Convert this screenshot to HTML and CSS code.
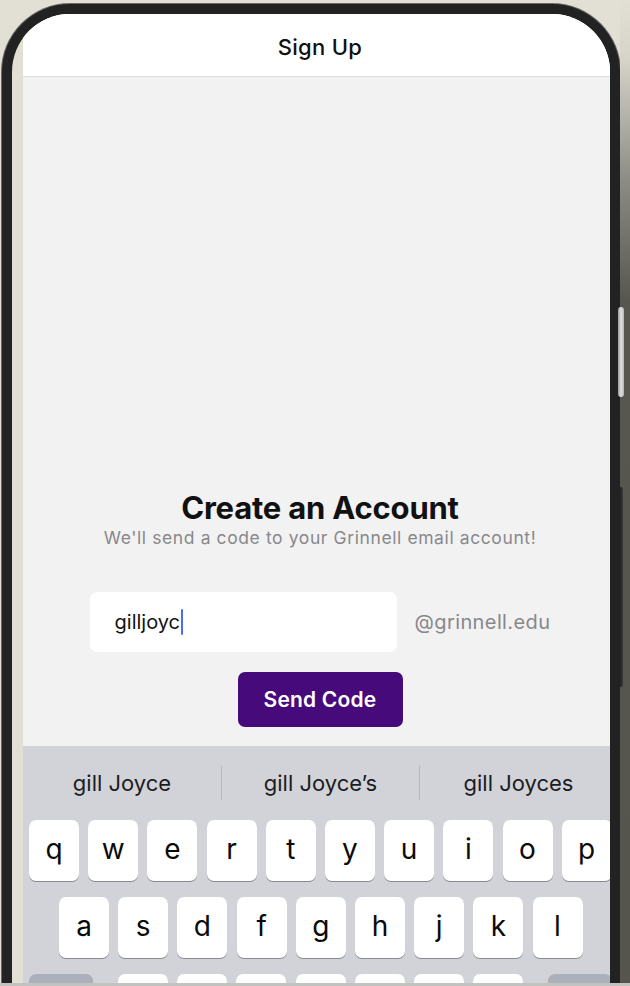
FILE: index.html
```html
<!DOCTYPE html>
<html lang="en">
<head>
<meta charset="utf-8">
<title>Sign Up</title>
<link rel="stylesheet" href="styles.css">
</head>
<body>
<div class="device">
  <div class="phone">
    <div class="screen">
      <header class="nav"><h1>Sign Up</h1></header>
      <main class="content">
        <h2 class="title">Create an Account</h2>
        <p class="subtitle">We'll send a code to your Grinnell email account!</p>
        <div class="email-row">
          <div class="field"><span class="typed">gilljoyc</span><span class="caret"></span></div>
          <span class="domain">@grinnell.edu</span>
        </div>
        <button class="send" type="button">Send Code</button>
      </main>
      <div class="keyboard">
        <div class="suggestions">
          <span class="sugg">gill Joyce</span>
          <span class="sugg">gill Joyce’s</span>
          <span class="sugg">gill Joyces</span>
        </div>
        <div class="krow r1">
          <span class="key">q</span><span class="key">w</span><span class="key">e</span><span class="key">r</span><span class="key">t</span><span class="key">y</span><span class="key">u</span><span class="key">i</span><span class="key">o</span><span class="key">p</span>
        </div>
        <div class="krow r2">
          <span class="key">a</span><span class="key">s</span><span class="key">d</span><span class="key">f</span><span class="key">g</span><span class="key">h</span><span class="key">j</span><span class="key">k</span><span class="key">l</span>
        </div>
        <div class="krow r3">
          <span class="key mod"></span>
          <div class="letters">
            <span class="key"></span><span class="key"></span><span class="key"></span><span class="key"></span><span class="key"></span><span class="key"></span><span class="key"></span>
          </div>
          <span class="key mod"></span>
        </div>
      </div>
    </div>
  </div>
  <div class="side"></div>
  <div class="side-btn light"></div>
  <div class="side-btn dark"></div>
</div>
<div class="bottom-edge"></div>
</body>
</html>
```

FILE: styles.css
```css
* { box-sizing: border-box; }

html, body {
  margin: 0;
  padding: 0;
}

body {
  width: 630px;
  height: 986px;
  overflow: hidden;
  background: #e2e0d5;
  font-family: Inter, "Noto Sans", "Liberation Sans", sans-serif;
  color: #111;
}

.device {
  position: relative;
  display: flex;
  width: 630px;
  height: 986px;
}

.phone {
  margin: 4px 0 0 2px;
  width: 618px;
  height: 1000px;
  flex: none;
  border: 10px solid #222;
  border-bottom: none;
  border-radius: 68px 68px 0 0;
  background: #e2e0d5;
  overflow: hidden;
  box-shadow: 0 0 0 1px #6a6a66;
}

.side {
  flex: 1;
  background: linear-gradient(to bottom, #e2e0d5 0, #d6d4c9 60px, #8d8c84 180px, #58574f 300px, #55544d 100%);
}

.side-btn {
  position: absolute;
  left: 618px;
  width: 6px;
  border-radius: 3px;
}
.side-btn.light {
  top: 307px;
  height: 90px;
  background: linear-gradient(to right, #9a9a9a, #e2e2e2 50%, #b5b5b5);
}
.side-btn.dark {
  top: 487px;
  height: 200px;
  width: 4px;
  left: 619px;
  background: linear-gradient(to right, #1b1b1b, #3a3a38);
}

.screen {
  margin-left: 11px;
  width: 594px;
  height: 972px;
  display: flex;
  flex-direction: column;
  background: #f2f2f2;
}

.nav {
  height: 63px;
  flex: none;
  background: #fff;
  border-bottom: 1px solid #dedede;
  display: flex;
  align-items: center;
  justify-content: center;
  padding-top: 4px;
}

.nav h1 {
  margin: 0;
  font-size: 22px;
  font-weight: 500;
  letter-spacing: 0.3px;
  color: #111;
}

.content {
  flex: 1;
  display: flex;
  flex-direction: column;
  align-items: center;
  justify-content: flex-end;
  padding-bottom: 19px;
}

.title {
  margin: 0 0 2px;
  font-size: 31px;
  line-height: 37px;
  font-weight: 700;
  letter-spacing: -0.2px;
  color: #111;
}

.subtitle {
  margin: 0;
  font-size: 17.5px;
  line-height: 20px;
  letter-spacing: 0.6px;
  color: #88888c;
}

.email-row {
  margin-top: 44px;
  height: 60px;
  display: flex;
  align-items: center;
  gap: 18px;
}

.field {
  width: 307px;
  height: 60px;
  background: #fff;
  border-radius: 7px;
  padding-left: 25px;
  display: flex;
  align-items: center;
  font-size: 20px;
  line-height: 24px;
  color: #111;
}

.caret {
  display: inline-block;
  width: 2px;
  height: 26px;
  margin-left: 1px;
  background: #4d6af0;
  border-radius: 1px;
}

.domain {
  font-size: 20px;
  line-height: 24px;
  letter-spacing: 0.4px;
  color: #88888c;
}

.send {
  margin-top: 20px;
  width: 165px;
  height: 55px;
  border: none;
  border-radius: 7px;
  background: #470a7a;
  color: #fff;
  font-family: inherit;
  font-size: 21px;
  font-weight: 600;
  letter-spacing: 0.2px;
}

.keyboard {
  height: 240px;
  flex: none;
  overflow: hidden;
  background: #d1d3d9;
  display: flex;
  flex-direction: column;
  gap: 16px;
}

.suggestions {
  height: 74px;
  flex: none;
  margin-bottom: -16px;
  display: grid;
  grid-template-columns: repeat(3, 1fr);
  align-items: center;
}

.sugg {
  height: 34px;
  display: flex;
  align-items: center;
  justify-content: center;
  font-size: 22px;
  color: #1c1c1e;
}
.sugg + .sugg {
  border-left: 1px solid #b4b7be;
}

.krow {
  display: flex;
  gap: 9.2px;
  flex: none;
}
.krow.r1 { padding-left: 6px; }
.krow.r2 { padding-left: 36px; }
.krow.r3 {
  padding: 0 5px 0 6px;
  justify-content: space-between;
}
.letters {
  display: flex;
  gap: 9.2px;
}

.key {
  width: 50px;
  height: 61px;
  flex: none;
  background: #fff;
  border-radius: 7px;
  box-shadow: 0 1px 0 #898a8e;
  display: flex;
  align-items: center;
  justify-content: center;
  padding-bottom: 4px;
  font-size: 28px;
  font-weight: 400;
  color: #0a0a0a;
}
.key.mod {
  width: 64px;
  background: #abb0ba;
}

.bottom-edge {
  position: fixed;
  left: 0;
  right: 0;
  bottom: 0;
  height: 3px;
  background: #c2c2c0;
}
```
